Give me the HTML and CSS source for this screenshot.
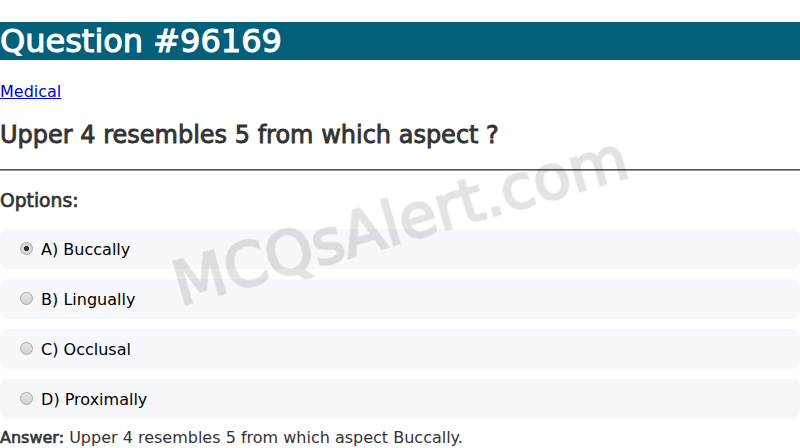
FILE: index.html
```html
<!DOCTYPE html>
<html>
<head>
<meta charset="utf-8">
<link rel="stylesheet" href="styles.css">
</head>
<body>
<h1 class="title">Question #96169</h1>
<div class="cat"><a href="#">Medical</a></div>
<h2 class="question">Upper 4 resembles 5 from which aspect ?</h2>
<hr class="sep">
<h3 class="opts-title">Options:</h3>
<div class="options">
  <label class="option"><input class="radio" type="radio" name="q" checked> A) Buccally</label>
  <label class="option"><input class="radio" type="radio" name="q"> B) Lingually</label>
  <label class="option"><input class="radio" type="radio" name="q"> C) Occlusal</label>
  <label class="option"><input class="radio" type="radio" name="q"> D) Proximally</label>
</div>
<div class="answer"><b class="ans-label">Answer:</b> Upper 4 resembles 5 from which aspect Buccally.</div>
<div class="watermark">MCQsAlert.com</div>
</body>
</html>
```

FILE: styles.css
```css
html, body {
  margin: 0;
  padding: 0;
  background: #fff;
}
body {
  font-family: "DejaVu Sans", sans-serif;
  font-size: 16px;
  color: #000;
  overflow: hidden;
}
.title {
  margin: 21.6px 0 22.44px;
  font-size: 32px;
  font-weight: normal;
  -webkit-text-stroke: 1.05px #fff;
  color: #fff;
  background: #03607a;
}
.cat a {
  color: #0000ee;
}
.question {
  font-size: 24px;
  font-weight: normal;
  -webkit-text-stroke: 0.85px #333;
  color: #333;
  margin: 19.92px 0;
}
.sep {
  margin: 0;
  border: 0;
  border-top: 1px solid #555;
  border-bottom: 1px solid #999;
  height: 0;
}
.opts-title {
  font-size: 18.72px;
  font-weight: normal;
  -webkit-text-stroke: 0.7px #333;
  color: #333;
  margin: 18.72px 0;
}
.options {
  display: flex;
  flex-direction: column;
  gap: 10px;
}
.option {
  display: block;
  background: #f7f8fc;
  border-radius: 8px;
  padding: 10px 15px;
}
.radio {
  -webkit-appearance: none;
  appearance: none;
  display: inline-block;
  width: 13px;
  height: 13px;
  margin: 3px 3px 0 5px;
  border-radius: 50%;
  border: 1px solid #a8a8a8;
  background: linear-gradient(#e6e6e6, #d2d2d2);
  box-sizing: border-box;
  vertical-align: baseline;
}
.radio:checked {
  background: radial-gradient(circle, #333 0, #333 2.3px, #dcdcdc 2.9px, #d0d0d0 100%);
}
.answer {
  margin-top: 9px;
  color: #333;
}
.ans-label {
  font-weight: normal;
  -webkit-text-stroke: 0.6px #333;
}
.watermark {
  position: fixed;
  left: 50%;
  top: 50%;
  transform: translate(-50%, -55%) rotate(-16deg);
  font-size: 61px;
  color: #000;
  -webkit-text-stroke: 2.5px #000;
  opacity: 0.11;
  white-space: nowrap;
  pointer-events: none;
}
```
